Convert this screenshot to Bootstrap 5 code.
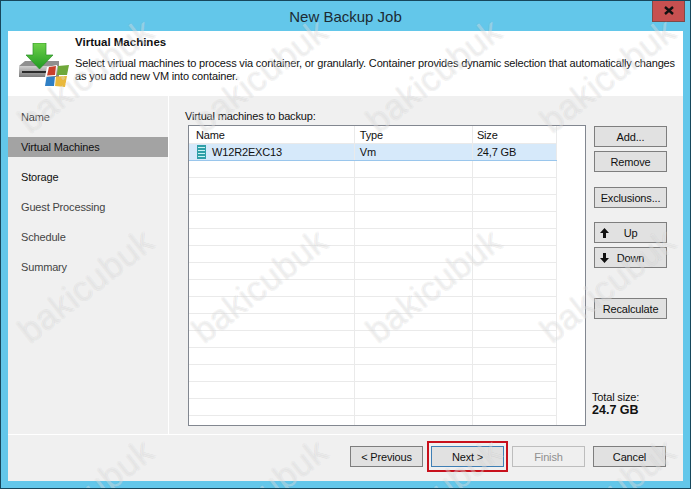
<!DOCTYPE html>
<html lang="en">
<head>
<meta charset="utf-8">
<title>New Backup Job</title>
<link href="https://cdn.jsdelivr.net/npm/bootstrap@5.3.0/dist/css/bootstrap.min.css" rel="stylesheet">
<style>
html,body{margin:0;height:100%;background:#63c7ea;}
body{font-family:"Liberation Sans",Arial,sans-serif;font-size:11px;letter-spacing:-.16px;color:#111;line-height:1;}
.shell{width:691px;height:489px;position:relative;overflow:hidden;background:#63c7ea;border:1px solid #17475c;display:flex;flex-direction:column;padding:0 7px 7px 7px;}
.titlebar{height:30px;flex:none;font-size:15px;letter-spacing:0;color:#1c2b33;padding-top:8px;text-align:center;position:relative;}
.closer{position:absolute;top:-1px;right:-2px;width:33px;height:22px;background:#c75050;border:1px solid #7e4a48;border-top:0;display:flex;align-items:center;justify-content:center;}
.panel{flex:1;min-height:0;background:#f0f0f0;display:flex;flex-direction:column;}
.head{height:65px;flex:none;background:#fff;display:flex;padding-left:11px;}
.head svg{margin-top:12px;flex:none;}
.headtext{margin-left:6px;padding-top:4px;}
.headtitle{font-weight:700;font-size:11.500px;letter-spacing:0;line-height:14px;margin-bottom:8px;}
.headbody{line-height:13px;width:605px;}
.mid{flex:1;min-height:0;display:flex;}
.side{width:160px;flex:none;padding-top:11px;border-right:1px solid #fff;box-sizing:content-box;}
.step{height:20px;margin-bottom:10px;padding-left:13px;display:flex;align-items:center;color:#444;}
.step-now{background:#a3a3a3;color:#111;}
.step-on{color:#111;}
.main{flex:1;display:flex;padding:14px 0 0 16px;min-width:0;}
.listcol{width:405px;flex:none;}
.listcap{height:15px;line-height:13px;}
.listbox{width:398px;height:301px;margin-left:3px;background:#fff;border:1px solid #828790;overflow:hidden;}
.vmgrid{table-layout:fixed;width:368px;margin:0;border-collapse:collapse;}
.vmgrid th,.vmgrid td{height:17px;padding:1px 0 0 7px;vertical-align:middle;border:1px solid #eaeaea;border-top:0;font-weight:400;font-size:11px;line-height:14px;background:transparent;box-shadow:none;color:#111;}
.vmgrid th{padding-top:2px;}
.vmgrid th:nth-child(2),.vmgrid td:nth-child(2){padding-left:5px;}
.vmgrid th:nth-child(3),.vmgrid td:nth-child(3){padding-left:4px;}
.vmgrid th:first-child,.vmgrid td:first-child{border-left:0;}
.vmgrid tr.picked td{background:#d6e9fa;border-top:1px solid #9ac6ec;border-bottom:1px solid #9ac6ec;}
.vmname{display:flex;align-items:center;gap:6px;padding-left:1px;}
.acts{width:73px;flex:none;margin-left:4px;display:flex;flex-direction:column;position:relative;padding-top:1px;height:100%;}
.winbtn{width:73px;height:21px;padding:1px 0 0;border:1px solid #7e7e7e;border-radius:0;background:#e1e1e1;color:#111;font-size:11px;letter-spacing:-.16px;line-height:1;font-family:inherit;flex:none;}
.winbtn:hover{background:#e1e1e1;color:#111;border-color:#7e7e7e;}
.gap-a{margin-top:4px;}
.gap-b{margin-top:15px;}
.gap-c{margin-top:14px;}
.gap-d{margin-top:30px;}
.arrowbtn{display:grid;grid-template-columns:1fr auto 1fr;align-items:center;}
.arrowbtn svg{justify-self:start;margin-left:5px;}
.totals{margin-top:auto;margin-bottom:17px;margin-left:-2px;line-height:13px;}
.totals b{display:block;font-size:12.500px;letter-spacing:0;}
.foot{height:47px;flex:none;border-top:1px solid #fff;display:flex;padding:11px 0 0 342px;gap:8px;}
.winbtn.nextbtn{position:relative;border-color:#3f7fb5;}
.nextbtn::after{content:"";position:absolute;top:-6px;bottom:-6px;left:-5px;right:-5px;border:2px solid #c8101c;}
.winbtn.off{color:#8f8f8f;background:#efefef;border-color:#bdbdbd;}
.marks{position:absolute;left:-3px;top:-31px;display:grid;grid-template-columns:repeat(4,174px);grid-auto-rows:210px;pointer-events:none;}
.mark-w{display:flex;align-items:center;justify-content:center;font-size:35px;letter-spacing:.3px;color:rgba(255,255,255,.3);text-shadow:1px 0 0 rgba(150,150,150,.08),-1px 0 0 rgba(150,150,150,.08),0 1px 0 rgba(150,150,150,.08),0 -1px 0 rgba(150,150,150,.08);transform:rotate(-38deg);white-space:nowrap;line-height:1;}
</style>
</head>
<body>
<div class="shell">
  <div class="titlebar">New Backup Job
    <div class="closer"><svg width="10" height="9" viewBox="0 0 10 9"><path d="M1 1 9 8M9 1 1 8" stroke="#111" stroke-width="2.400" fill="none"/></svg></div>
  </div>
  <div class="panel">
    <div class="head">
      <svg width="50" height="44" viewBox="0 0 50 44">
        <defs>
          <linearGradient id="drv" x1="0" y1="0" x2="0" y2="1"><stop offset="0" stop-color="#d0d0d0"/><stop offset="1" stop-color="#7a7a7a"/></linearGradient>
          <linearGradient id="arr" x1="0" y1="0" x2="0" y2="1"><stop offset="0" stop-color="#6fd24a"/><stop offset="1" stop-color="#1f9a22"/></linearGradient>
        </defs>
        <path d="M6 18H40V23H0Z" fill="#8f8f8f"/>
        <rect x="0" y="23" width="40" height="11" fill="url(#drv)"/>
        <rect x="3" y="28" width="26" height="2" fill="#2b2b2b"/>
        <path d="M14 0H27V12H34L20.500 26 7 12H14Z" fill="url(#arr)" stroke="#2d8f2a" stroke-width=".7"/>
        <path d="M28 24 38 22 37 33 26 34Z" fill="#fff"/>
        <path d="M30 24 37 23 36 32 28 32.500Z" fill="#c8402c"/>
        <path d="M39 23 50 22 48 32 38 32Z" fill="#6fa83a"/>
        <path d="M27.500 34 36 33.500 35 43 26 43Z" fill="#2f7fc4"/>
        <path d="M37 33.500 48 33 46 44 36 43Z" fill="#e9b93c"/>
      </svg>
      <div class="headtext">
        <div class="headtitle">Virtual Machines</div>
        <div class="headbody">Select virtual machines to process via container, or granularly. Container provides dynamic selection that automatically changes as you add new VM into container.</div>
      </div>
    </div>
    <div class="mid">
      <div class="side">
        <div class="step">Name</div>
        <div class="step step-now">Virtual Machines</div>
        <div class="step step-on">Storage</div>
        <div class="step">Guest Processing</div>
        <div class="step">Schedule</div>
        <div class="step">Summary</div>
      </div>
      <div class="main">
        <div class="listcol">
          <div class="listcap">Virtual machines to backup:</div>
          <div class="listbox">
            <table class="vmgrid">
              <colgroup><col style="width:165px"><col style="width:118px"><col style="width:84px"></colgroup>
              <thead><tr><th>Name</th><th>Type</th><th>Size</th></tr></thead>
              <tbody>
                <tr class="picked"><td><div class="vmname"><svg width="9" height="14" viewBox="0 0 9 14"><rect width="9" height="14" fill="#2f9fa8"/><path d="M1 2.500H8M1 5.500H8M1 8.500H8M1 11.500H8" stroke="#c8f2f2" stroke-width="1"/></svg>W12R2EXC13</div></td><td>Vm</td><td>24,7 GB</td></tr>
                <tr><td></td><td></td><td></td></tr><tr><td></td><td></td><td></td></tr><tr><td></td><td></td><td></td></tr>
                <tr><td></td><td></td><td></td></tr><tr><td></td><td></td><td></td></tr><tr><td></td><td></td><td></td></tr>
                <tr><td></td><td></td><td></td></tr><tr><td></td><td></td><td></td></tr><tr><td></td><td></td><td></td></tr>
                <tr><td></td><td></td><td></td></tr><tr><td></td><td></td><td></td></tr><tr><td></td><td></td><td></td></tr>
                <tr><td></td><td></td><td></td></tr><tr><td></td><td></td><td></td></tr><tr><td></td><td></td><td></td></tr>
                <tr><td></td><td></td><td></td></tr>
              </tbody>
            </table>
          </div>
        </div>
        <div class="acts">
          <div class="listcap"></div>
          <button type="button" class="btn winbtn">Add...</button>
          <button type="button" class="btn winbtn gap-a">Remove</button>
          <button type="button" class="btn winbtn gap-b">Exclusions...</button>
          <button type="button" class="btn winbtn gap-c arrowbtn"><svg width="9" height="10" viewBox="0 0 9 10"><path d="M4.500 0 9 5H6V10H3V5H0Z" fill="#111"/></svg><span>Up</span></button>
          <button type="button" class="btn winbtn gap-a arrowbtn"><svg width="9" height="10" viewBox="0 0 9 10"><path d="M4.500 10 9 5H6V0H3V5H0Z" fill="#111"/></svg><span>Down</span></button>
          <button type="button" class="btn winbtn gap-d">Recalculate</button>
          <div class="totals">Total size:<b>24.7 GB</b></div>
        </div>
      </div>
    </div>
    <div class="foot">
      <button type="button" class="btn winbtn">&lt; Previous</button>
      <button type="button" class="btn winbtn nextbtn">Next &gt;</button>
      <button type="button" class="btn winbtn off">Finish</button>
      <button type="button" class="btn winbtn">Cancel</button>
    </div>
  </div>
  <div class="marks" aria-hidden="true">
    <div class="mark-w">bakicubuk</div><div class="mark-w">bakicubuk</div><div class="mark-w">bakicubuk</div><div class="mark-w">bakicubuk</div>
    <div class="mark-w">bakicubuk</div><div class="mark-w">bakicubuk</div><div class="mark-w">bakicubuk</div><div class="mark-w">bakicubuk</div>
    <div class="mark-w">bakicubuk</div><div class="mark-w">bakicubuk</div><div class="mark-w">bakicubuk</div><div class="mark-w">bakicubuk</div>
  </div>
</div>
<script src="https://cdn.jsdelivr.net/npm/bootstrap@5.3.0/dist/js/bootstrap.bundle.min.js"></script>
</body>
</html>
